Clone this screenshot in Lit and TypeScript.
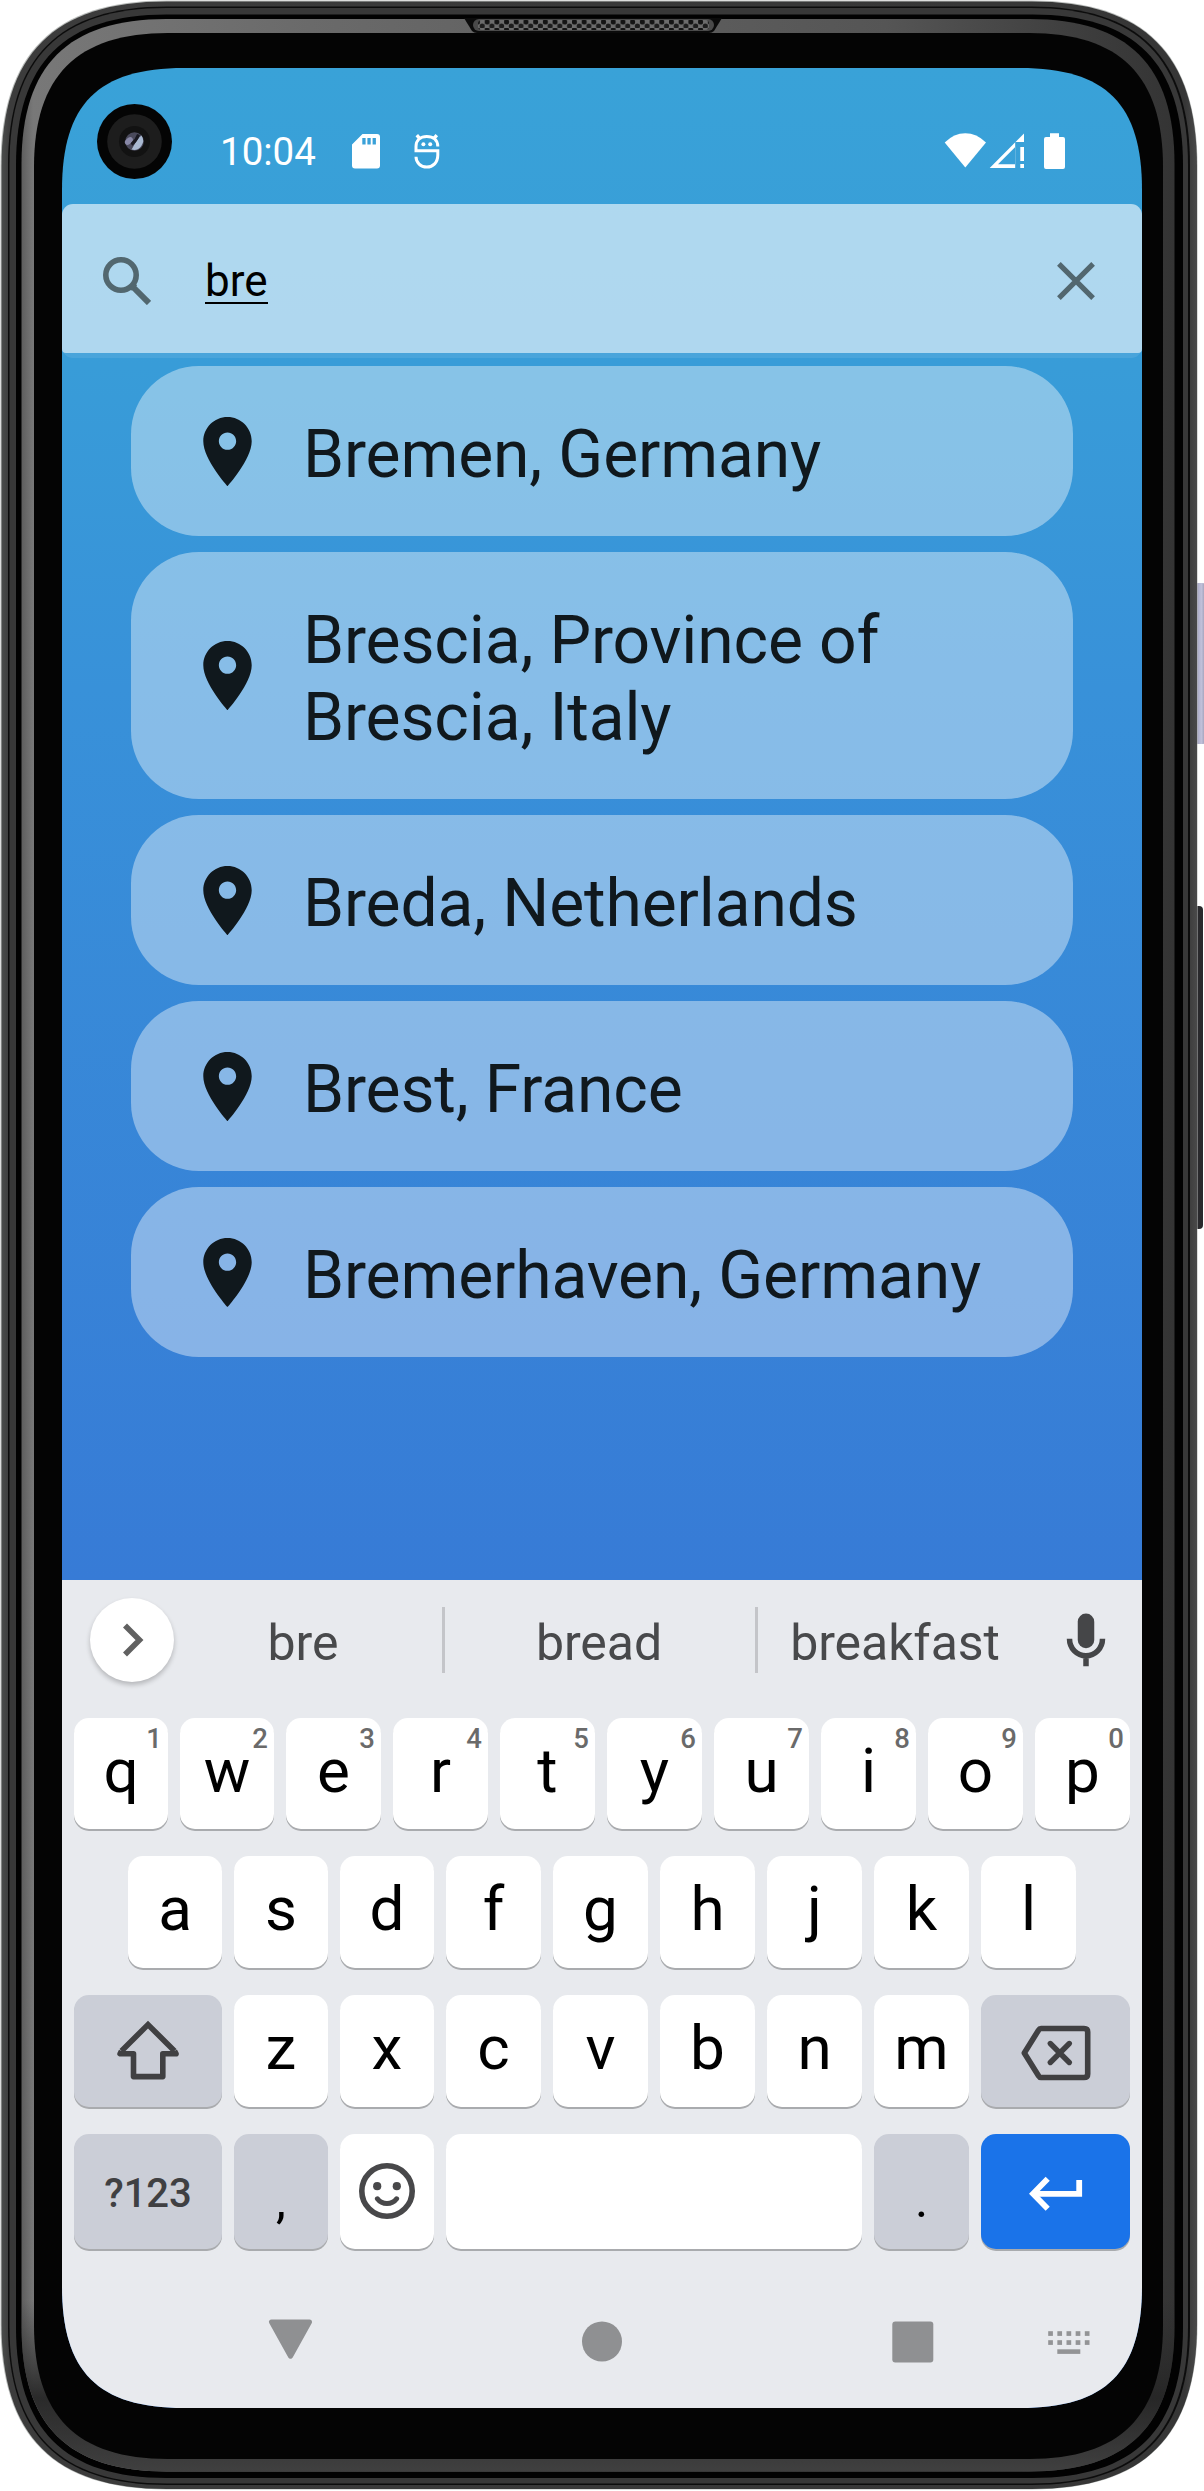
import { LitElement, html, svg, css, nothing } from "lit";
import { customElement, property } from "lit/decorators.js";

/* Closed outline of a smooth-cornered rectangle. */
function smoothRect(l: number, t: number, r: number, b: number, e: number, k = 0.32): string {
  const c = e * k;
  return [
    `M${l} ${t + e}C${l} ${t + c} ${l + c} ${t} ${l + e} ${t}`,
    `H${r - e}C${r - c} ${t} ${r} ${t + c} ${r} ${t + e}`,
    `V${b - e}C${r} ${b - c} ${r - c} ${b} ${r - e} ${b}`,
    `H${l + e}C${l + c} ${b} ${l} ${b - c} ${l} ${b - e}Z`,
  ].join("");
}

@customElement("device-frame")
class DeviceFrame extends LitElement {
  static styles = css`
    :host { display: block; width: 1204px; height: 2491px; }
    svg { display: block; }
  `;
  render() {
    return html`<svg width="1204" height="2491" viewBox="0 0 1204 2491">
      <defs>
        <linearGradient id="rim" x1="0" x2="1" y1="0" y2="0">
          <stop offset="0" stop-color="#4b4d4c" /><stop offset="0.007" stop-color="#3c3c3c" />
          <stop offset="0.99" stop-color="#363636" /><stop offset="1" stop-color="#4a4a4a" />
        </linearGradient>
        <linearGradient id="bevel" x1="0" x2="1" y1="0" y2="0">
          <stop offset="0" stop-color="#5e5e5e" /><stop offset="0.01" stop-color="#787878" />
          <stop offset="0.25" stop-color="#6a6a6a" /><stop offset="0.75" stop-color="#555" />
          <stop offset="0.93" stop-color="#3c3c3c" /><stop offset="1" stop-color="#343434" />
        </linearGradient>
        <linearGradient id="shade" x1="0" x2="0" y1="0" y2="1">
          <stop offset="0.93" stop-color="#282828" stop-opacity="0" />
          <stop offset="0.97" stop-color="#262626" stop-opacity="0.95" />
          <stop offset="1" stop-color="#404040" />
        </linearGradient>
        <linearGradient id="power" gradientUnits="userSpaceOnUse" x1="1196" x2="1204" y1="0" y2="0">
          <stop offset="0" stop-color="#85859c" /><stop offset="0.35" stop-color="#b4b4cf" />
          <stop offset="0.7" stop-color="#c0c0d9" /><stop offset="1" stop-color="#a6a6bf" />
        </linearGradient>
        <pattern id="mesh" width="9.7" height="8" x="475" y="20" patternUnits="userSpaceOnUse">
          <rect width="9.7" height="8" fill="#6c6c6c" />
          <circle cx="2.4" cy="2" r="2.6" fill="#141414" />
          <circle cx="7.2" cy="6" r="2.6" fill="#1d1d1d" />
        </pattern>
      </defs>
      <rect x="1194" y="583" width="12" height="161" rx="4" fill="url(#power)" />
      <rect x="1194" y="906" width="9" height="323" rx="4" fill="#29292c" />
      <path d=${smoothRect(0.5, 0.5, 1197.5, 2489.5, 166)} fill="#b9bcba" />
      <path d=${smoothRect(1.5, 1.5, 1197, 2489, 165)} fill="url(#rim)" />
      <path d=${smoothRect(8, 6.5, 1190, 2485, 159)} fill="#0c0c0c" />
      <path d=${smoothRect(9.5, 8, 1188, 2483.5, 157)} fill="#383838" />
      <path d=${smoothRect(16, 14.5, 1183, 2478, 151)} fill="#020202" />
      <path d=${smoothRect(21.5, 19, 1174.5, 2471.5, 145)} fill="url(#bevel)" />
      <path d=${smoothRect(21.5, 19, 1174.5, 2471.5, 145)} fill="url(#shade)" />
      <path d=${smoothRect(34, 33, 1163, 2459, 134)} fill="#040404" />
      <path d="M464 18H722L714 31Q712 33 709 33H477Q474 33 472 31Z" fill="#0b0b0b" />
      <rect x="473" y="19" width="241" height="12" rx="6" fill="#4a4a4a" />
      <rect x="478" y="20" width="231" height="10" rx="4" fill="url(#mesh)" />
    </svg>`;
  }
}

@customElement("status-bar")
class StatusBar extends LitElement {
  static styles = css`
    :host { display: flex; align-items: flex-start; height: 136px; box-sizing: border-box; padding: 36px 74px 0 35px; }
    svg { display: block; flex: none; }
    .time { margin: 22px 0 0 48px; font-size: 38.5px; line-height: 52px; color: #fff; white-space: nowrap; width: 97px; }
    .sd { margin: 30px 0 0 35px; }
    .debug { margin: 30px 0 0 34px; }
    .radio { margin: 29px 0 0 auto; }
  `;
  render() {
    return html`
      <svg width="75" height="75" viewBox="-37.5 -37.5 75 75">
        <circle r="37.5" fill="#040404" /><circle r="27.3" fill="#1d1d1d" />
        <circle r="15.5" fill="#121212" /><circle r="9.3" fill="#4a4a5c" />
        <ellipse cx="-4" cy="-4" rx="4.5" ry="3" transform="rotate(-40)" fill="#8787a6" />
        <path d="M-3 8C0 4 1-1 7-6A9.2 9.2 0 0 1-3 8Z" fill="#a9b9d2" />
        <path d="M4-7Q2-1-3 3" fill="none" stroke="#191922" stroke-width="3" />
      </svg>
      <div class="time">10:04</div>
      <svg class="sd" width="28" height="35" viewBox="0 0 28 35">
        <path fill="#fff" fill-rule="evenodd" d="M10.5 0H25Q28 0 28 3V31.5Q28 34.5 25 34.5H3Q0 34.5 0 31.5V10.5ZM10.3 4V10.5H13.6V4ZM15.4 4V10.5H18.7V4ZM20.6 4V10.5H23.9V4Z" />
      </svg>
      <svg class="debug" width="26" height="35" viewBox="0 0 26 35" fill="none" stroke="#fff" stroke-width="3">
        <path d="M23.800 12.600C23.800 5.500 19 2.600 12.800 2.600S2 6 2 12.600V16.800H23.800V21C23.800 28.600 19 33 12.800 33S2 28.600 2 22.800" />
        <path d="M2.800 1.200L6 4.800M22.800 1.200L19.600 4.800" stroke-width="3.400" />
        <circle cx="9.400" cy="10.200" r="2" fill="#fff" stroke="none" />
        <circle cx="16.200" cy="10.200" r="2" fill="#fff" stroke="none" />
      </svg>
      <svg class="radio" width="124" height="37" viewBox="944 133 124 37" fill="#fff">
        <path d="M944.7 142.4Q954 133.2 965.3 133.2T986 142.4L965.3 167.5Z" />
        <path fill-rule="evenodd" d="M989.7 168L1024 133.5V142H1015.2V168ZM998 164.3H1015V147.3Z" />
        <path d="M1020.3 147H1024V161H1020.3ZM1020.3 164H1024V168H1020.3Z" />
        <path d="M1050 133.3H1059V137H1063Q1065 137 1065 139V167Q1065 169 1063 169H1046Q1044 169 1044 167V139Q1044 137 1046 137H1050Z" />
      </svg>
    `;
  }
}

@customElement("search-bar")
class SearchBar extends LitElement {
  @property() query = "";
  static styles = css`
    :host { display: block; height: 154px; border-radius: 11px; background: rgba(255, 255, 255, 0.09); }
    .field {
      display: flex; align-items: center; height: 148.5px; box-sizing: border-box;
      border-radius: 11px 11px 4px 4px; background: rgba(255, 255, 255, 0.56); padding: 5px 47px 0 41px;
    }
    .query { flex: 1; margin-left: 54px; font-size: 44px; line-height: 52px; color: #000; }
    .typed { display: inline-block; height: 46px; line-height: 50px; border-bottom: 2.4px solid #000; }
  `;
  render() {
    return html`<div class="field">
      <svg width="48" height="48" viewBox="0 0 48 48" fill="none" stroke="#52676f">
        <circle cx="18" cy="18" r="15.2" stroke-width="5.6" />
        <path d="M29 29L46 46" stroke-width="6" /><path d="M29 28.5L31.5 31" stroke-width="7.5" />
      </svg>
      <div class="query"><span class="typed">${this.query}</span></div>
      <svg width="38" height="38" viewBox="0 0 38 38" stroke="#52676f" stroke-width="5.2">
        <path d="M1.9 1.9L36.1 36.1M36.1 1.9L1.9 36.1" />
      </svg>
    </div>`;
  }
}

@customElement("place-card")
class PlaceCard extends LitElement {
  @property() name = "";
  static styles = css`
    :host {
      display: flex; align-items: center; box-sizing: border-box; min-height: 170px;
      padding: 0 40px 0 55px; border-radius: 68px; background: rgba(255, 255, 255, 0.4);
    }
    svg { flex: none; }
    .name {
      margin-left: 34px; padding: 49.5px 0 43.5px; width: 690px; font-size: 66px; line-height: 77px;
      letter-spacing: -0.15px; color: #10181d;
    }
  `;
  render() {
    return html`
      <svg width="83" height="83" viewBox="0 0 24 24" fill="#10181d">
        <path d="M12 2C8.13 2 5 5.13 5 9c0 5.25 7 13 7 13s7-7.75 7-13c0-3.87-3.13-7-7-7zm0 9.5c-1.38 0-2.5-1.12-2.5-2.5s1.12-2.5 2.5-2.5 2.5 1.12 2.5 2.5-1.12 2.5-2.5 2.5z" />
      </svg>
      <div class="name">${this.name}</div>
    `;
  }
}

const shiftIcon = svg`<svg width="64" height="62" viewBox="115.5 2019 64 62" fill="none" stroke="#404042" stroke-width="5.6" stroke-linejoin="round">
  <path stroke-linejoin="miter" d="M121 2051L147.5 2024.6L174 2051" /><path d="M121 2051L119.6 2053.8H133V2076.6H162.3V2053.8H175.6L174 2051" /></svg>`;
const eraseIcon = svg`<svg width="72" height="58" viewBox="1019 2024.5 72 58" fill="none" stroke="#404042" stroke-width="5.6" stroke-linejoin="round">
  <path d="M1040 2029H1083Q1086.7 2029 1086.7 2032.5V2074.5Q1086.7 2078 1083 2078H1040Q1038.500 2078 1037.500 2076.300L1023.3 2053.500L1037.500 2030.700Q1038.500 2029 1040 2029Z" />
  <path stroke-linecap="round" stroke-width="5.400" d="M1049.300 2044L1068.300 2063M1068.300 2044L1049.300 2063" /></svg>`;
const smileIcon = svg`<svg width="56" height="56" viewBox="-28 -28 56 56" fill="none" stroke="#48484a" stroke-width="5.6">
  <circle r="25.2" /><circle cx="-9.800" cy="-4.800" r="4.100" fill="#48484a" stroke="none" /><circle cx="9.800" cy="-4.800" r="4.100" fill="#48484a" stroke="none" />
  <path stroke-linecap="round" stroke-width="5" d="M-9.600 7.800Q-6 12.600 0 12.600T9.600 7.800" /></svg>`;
const enterIcon = svg`<svg width="54" height="36" viewBox="1027 2176 54 36" fill="none" stroke="#fff" stroke-width="5.8">
  <path d="M1077.200 2180V2193.800H1032" /><path d="M1045.700 2178.700L1031 2193.800L1045.700 2208.700" /></svg>`;

interface Key { label?: string; hint?: string; icon?: unknown; kind?: string; }

@customElement("key-cap")
class KeyCap extends LitElement {
  @property({ attribute: false }) key: Key = {};
  static styles = css`
    :host { display: block; min-width: 0; }
    .cap {
      position: relative; display: flex; justify-content: center; height: 100%;
      border-radius: 15px; background: #fff; box-shadow: 0 2px 0 #a9abae; color: #000;
    }
    .label { font-size: 62px; line-height: 73px; margin-top: 15.5px; }
    .hint { position: absolute; right: 6px; top: 5px; font-size: 27.5px; line-height: 32px; font-weight: 500; color: #6a6a6a; }
    .mod { background: #cbced7; }
    .go { background: #1a73e9; }
    .icon { align-self: center; display: flex; }
    .sym .label { font-size: 40px; line-height: 48px; margin-top: 36px; font-weight: 500; color: #404042; }
    .punct .label { font-size: 50px; line-height: 60px; margin-top: 36px; }
    .smile .icon { margin-bottom: 1px; }
    .shift .icon { margin-bottom: 2px; }
    .go .icon { margin-top: 5px; }
    .erase .icon { margin-top: 4px; }
  `;
  render() {
    const k = this.key;
    return html`<div class="cap ${k.kind ?? ""}">
      ${k.label ? html`<span class="label">${k.label}</span>` : nothing}
      ${k.hint ? html`<span class="hint">${k.hint}</span>` : nothing}
      ${k.icon ? html`<span class="icon">${k.icon}</span>` : nothing}
    </div>`;
  }
}

const letters = (s: string): Key[] => [...s].map((label) => ({ label }));
const digits = "1234567890";

@customElement("soft-keyboard")
class SoftKeyboard extends LitElement {
  static styles = css`
    :host { display: block; background: #e8eaee; }
    .strip { display: flex; align-items: center; height: 120px; padding: 0 23px 0 28px; margin-bottom: 18px; }
    .more {
      display: flex; align-items: center; justify-content: center; width: 84px; height: 84px;
      border-radius: 50%; background: #fff; box-shadow: 0 3px 5px rgba(0, 0, 0, 0.22);
    }
    .chevron { margin-left: 1px; }
    .mic { margin-top: 2px; }
    .word { text-align: center; font-size: 50px; line-height: 60px; padding-top: 6px; letter-spacing: -0.1px; color: #48494b; }
    .first { width: 258px; margin-right: 10px; }
    .second { width: 308px; margin-right: 2px; }
    .third { width: 274px; margin-right: 21px; }
    .bar { width: 3px; height: 66px; background: #c4c5c9; }
    .keys { display: grid; grid-template-rows: 111px 112px 112px 115px; row-gap: 27px; padding: 0 12px; }
    .row { display: grid; column-gap: 12px; grid-template-columns: repeat(2, 94px) repeat(8, 95px); }
    .home { padding: 0 54px; grid-template-columns: repeat(3, 94px) repeat(6, 95px); }
    .lower { grid-template-columns: 148px repeat(2, 94px) repeat(5, 95px) 149px; }
    .base { grid-template-columns: 148px 94px 94px 1fr 95px 149px; }
    .nav { display: flex; height: 159px; align-items: flex-start; padding-top: 69px; box-sizing: border-box; }
    .nav svg { display: block; flex: none; }
    .back { margin-left: 206px; }
    .home-dot { margin: 3px 0 0 269px; }
    .recent { margin: 3px 0 0 270px; }
    .switch { margin: 12px 0 0 114px; }
  `;
  private row(cls: string, keys: Key[]) {
    return html`<div class="row ${cls}">${keys.map((k) => html`<key-cap .key=${k}></key-cap>`)}</div>`;
  }
  render() {
    return html`
      <div class="strip">
        <div class="more">
          <svg class="chevron" width="22" height="34" viewBox="0 0 22 34" fill="none" stroke="#616161" stroke-width="5.6">
            <path d="M3 2.500L17.500 17L3 31.500" />
          </svg>
        </div>
        <div class="word first">bre</div><div class="bar"></div>
        <div class="word second">bread</div><div class="bar"></div>
        <div class="word third">breakfast</div>
        <svg class="mic" width="66" height="66" viewBox="0 0 24 24">
          <rect x="9" y="2" width="6" height="12.600" rx="3" fill="#454648" />
          <path d="M6 11.200C6 14.700 8.700 17.400 12 17.400S18 14.700 18 11.200M12 17.400V21.200" fill="none" stroke="#454648" stroke-width="2" />
        </svg>
      </div>
      <div class="keys">
        ${this.row("", letters("qwertyuiop").map((k, i) => ({ ...k, hint: digits[i] })))}
        ${this.row("home", letters("asdfghjkl"))}
        ${this.row("lower", [{ icon: shiftIcon, kind: "mod shift" }, ...letters("zxcvbnm"), { icon: eraseIcon, kind: "mod erase" }])}
        ${this.row("base", [
          { label: "?123", kind: "mod sym" },
          { label: ",", kind: "mod punct" },
          { icon: smileIcon, kind: "smile" },
          {},
          { label: ".", kind: "mod punct" },
          { icon: enterIcon, kind: "go" },
        ])}
      </div>
      <div class="nav">
        <svg class="back" width="45" height="42" viewBox="0 0 45 42"><path d="M3.500 4L41.500 4L22.500 38.200Z" fill="#8f9092" stroke="#8f9092" stroke-width="5" stroke-linejoin="round" /></svg>
        <svg class="home-dot" width="40" height="41" viewBox="0 0 40 41"><ellipse cx="20" cy="20.500" rx="20" ry="20" fill="#8f9092" /></svg>
        <svg class="recent" width="42" height="42" viewBox="0 0 42 42"><rect x="0.300" y="0.500" width="41" height="41" rx="3" fill="#8f9092" /></svg>
        <svg class="switch" width="43" height="25" viewBox="0 0 43 25" fill="#939496">
          ${[0, 1, 2, 3, 4].map((i) => svg`<rect x=${i * 9.15 + 0.2} y="1.200" width="4.700" height="4.700" /><rect x=${i * 9.15 + 0.2} y="10.200" width="4.700" height="4.700" />`)}
          <rect x="9.300" y="19.300" width="23" height="4.600" />
        </svg>
      </div>
    `;
  }
}

@customElement("app-root")
class AppRoot extends LitElement {
  static styles = css`
    :host {
      display: block; position: relative; box-sizing: border-box; width: 1204px; height: 2491px;
      padding: 68px 62px 83px; background: #fff; overflow: hidden; font-family: Roboto, "Liberation Sans", sans-serif;
    }
    device-frame { position: absolute; inset: 0; }
    .screen {
      position: relative; display: flex; flex-direction: column; height: 2340px; width: 1080px;
      background: linear-gradient(#39a2d8 0, #389cd8 300px, #3891d9 620px, #377bd6 1512px);
      clip-path: path("M0 122C0 36 36 0 122 0H958C1044 0 1080 36 1080 122V2218C1080 2304 1044 2340 958 2340H122C36 2340 0 2304 0 2218Z");
    }
    .results { display: flex; flex-direction: column; gap: 16px; padding: 8px 69px 0; flex: 1; }
  `;
  private places = [
    "Bremen, Germany",
    "Brescia, Province of Brescia, Italy",
    "Breda, Netherlands",
    "Brest, France",
    "Bremerhaven, Germany",
  ];
  render() {
    return html`
      <device-frame></device-frame>
      <div class="screen">
        <status-bar></status-bar>
        <search-bar .query=${"bre"}></search-bar>
        <div class="results">${this.places.map((p) => html`<place-card .name=${p}></place-card>`)}</div>
        <soft-keyboard></soft-keyboard>
      </div>
    `;
  }
}
